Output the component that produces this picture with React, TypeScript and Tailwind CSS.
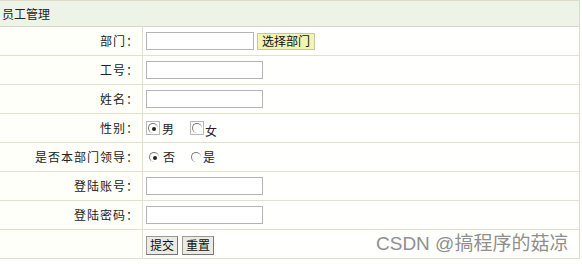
import React from 'react';

const font = { fontFamily: '"Noto Sans CJK SC", "Noto Sans", sans-serif' };

const Row: React.FC<{ label?: string; children?: React.ReactNode }> = ({ label, children }) => (
  <div className="flex h-[29px] border-b border-[#e2e2cc]">
    <div className="w-[143px] shrink-0 flex items-center justify-end pr-[3px] text-[12px] text-[#222] tracking-[1px] border-r border-[#e2e2cc] bg-[#fffffa]">
      {label}
    </div>
    <div className="flex-1 flex items-center pl-[3px] bg-[#fffffd]">{children}</div>
  </div>
);

const TextBox: React.FC<{ w?: string }> = ({ w = 'w-[117px]' }) => (
  <div className={`${w} h-[18px] bg-white border border-[#b4b4b4]`} />
);

const Radio: React.FC<{ on?: boolean }> = ({ on }) => (
  <span className="w-[10px] h-[10px] rounded-full border-l border-t border-[#7a7a7a] flex items-center justify-center">
    {on && <span className="w-[4px] h-[4px] rounded-full bg-[#222]" />}
  </span>
);

const Btn: React.FC<{ text: string }> = ({ text }) => (
  <div className="h-[19px] px-[3px] flex items-center text-[12px] text-[#111] bg-[#ecebe3] border border-[#9a9a90] border-r-[#777] border-b-[#777]">
    {text}
  </div>
);

export default function App() {
  return (
    <div className="relative w-[582px] h-[264px] bg-white overflow-hidden" style={font}>
      <div className="w-[580px] border-t border-r border-[#dcdcc6]">
        <div className="h-[26px] flex items-center pl-[2px] text-[12px] text-[#222] bg-[#edf3e6] border-b border-[#d8d8c4]">
          员工管理
        </div>
        <Row label="部门：">
          <TextBox w="w-[108px]" />
          <div className="ml-[3px] h-[17px] w-[58px] flex items-center justify-center text-[12px] text-[#111] bg-[#f3f3b4] border border-[#c8c8a0]">
            选择部门
          </div>
        </Row>
        <Row label="工号：">
          <TextBox />
        </Row>
        <Row label="姓名：">
          <TextBox />
        </Row>
        <Row label="性别：">
          <div className="flex items-center text-[12px] text-[#222]">
            <span className="w-[14px] h-[14px] border border-[#b8b8b8] flex items-center justify-center">
              <Radio on />
            </span>
            <span className="ml-[2px] mt-[2px]">男</span>
            <span className="ml-[16px] w-[14px] h-[14px] border border-[#b8b8b8] flex items-center justify-center">
              <Radio />
            </span>
            <span className="ml-[1px] mt-[5px]">女</span>
          </div>
        </Row>
        <Row label="是否本部门领导：">
          <div className="flex items-center text-[12px] text-[#222] pl-[3px]">
            <Radio on />
            <span className="ml-[4px]">否</span>
            <span className="ml-[16px]"><Radio /></span>
            <span className="ml-[2px]">是</span>
          </div>
        </Row>
        <Row label="登陆账号：">
          <TextBox />
        </Row>
        <Row label="登陆密码：">
          <TextBox />
        </Row>
        <Row>
          <div className="flex items-center gap-[4px] mt-[2px]">
            <Btn text="提交" />
            <Btn text="重置" />
          </div>
        </Row>
      </div>
      <div className="absolute left-[376px] top-[232px] text-[19px] leading-[24px] text-[#8f8f8f] whitespace-nowrap" style={{ fontFamily: '"Liberation Sans", "Noto Sans CJK SC", sans-serif' }}>
        CSDN @搞程序的菇凉
      </div>
    </div>
  );
}
